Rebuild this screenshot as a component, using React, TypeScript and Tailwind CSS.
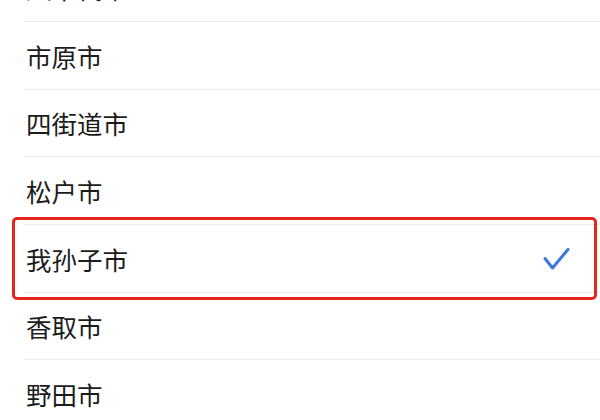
const cities = [
  { name: "八千代市", h: "h-[68px]" },
  { name: "市原市", h: "h-[68px]" },
  { name: "四街道市", h: "h-[67px]" },
  { name: "松户市", h: "h-[68px]" },
  { name: "我孙子市", h: "h-[68px]", selected: true },
  { name: "香取市", h: "h-[67px]" },
  { name: "野田市", h: "h-[68px]" },
];

function Check() {
  return (
    <svg width="28" height="24" viewBox="0 0 28 24" fill="none">
      <path
        d="M2 11.5 L9.5 21 L25 2.5"
        stroke="#3a78dc"
        strokeWidth="3"
        strokeLinecap="round"
        strokeLinejoin="round"
      />
    </svg>
  );
}

export default function App() {
  return (
    <div className="w-[600px] h-[420px] overflow-hidden bg-white font-['Noto_Sans_CJK_SC','Noto_Sans',sans-serif]">
      <ul className="-mt-[46px]">
        {cities.map((c) => (
          <li key={c.name} className={`relative ml-6 ${c.h}`}>
            <div className="flex h-full items-center justify-between border-b border-[#ebebeb] pl-[2px] pr-[29px]">
              <span className="text-[25.5px] leading-none text-[#1c1c1c]">{c.name}</span>
              {c.selected && <Check />}
            </div>
            {c.selected && (
              <div className="pointer-events-none absolute -left-3 right-[3px] -top-2 -bottom-[7px] rounded-[5px] border-[3px] border-[#e3261f]" />
            )}
          </li>
        ))}
      </ul>
    </div>
  );
}
